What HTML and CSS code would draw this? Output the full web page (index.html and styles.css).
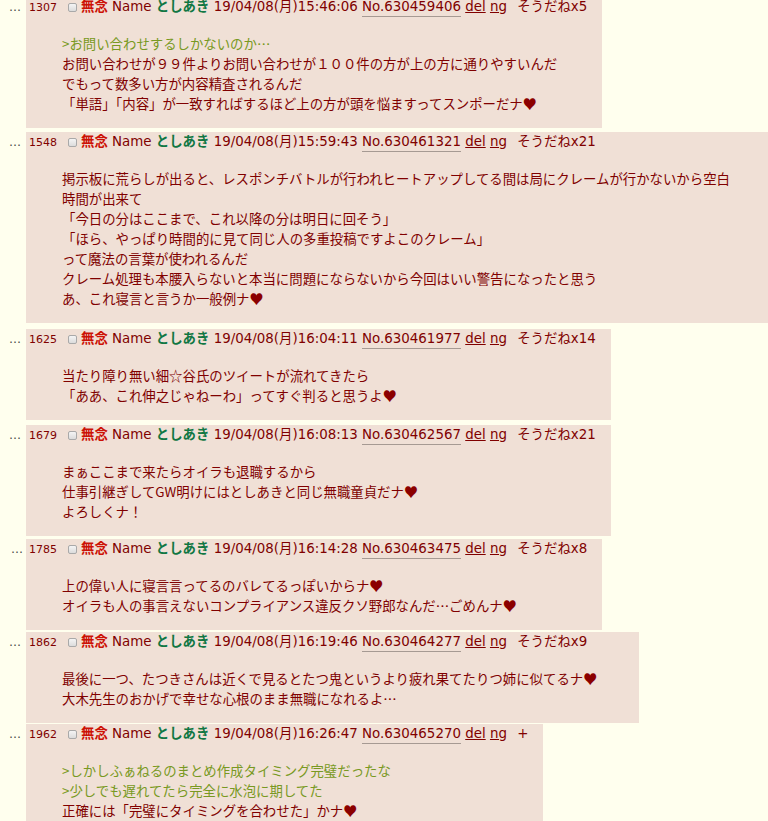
FILE: index.html
```html
<!DOCTYPE html>
<html lang="ja">
<head>
<meta charset="utf-8">
<title>thread</title>
<link rel="stylesheet" href="styles.css">
</head>
<body>
<div class="thread">

  <div class="row">
    <span class="dots">…</span>
    <div class="reply">
      <div class="head"><span class="rsc">1307</span><span class="chk"></span><span class="sub">無念</span> <span class="nm">Name</span> <span class="nick">としあき</span> <span class="dt">19/04/08(月)15:46:06</span> <span class="no">No.630459406</span> <a class="lnk">del</a> <a class="lnk">ng</a> <span class="sod">そうだねx5</span></div>
      <div class="body">
        <span class="quote">&gt;お問い合わせするしかないのか…</span><br>
        お問い合わせが９９件よりお問い合わせが１００件の方が上の方に通りやすいんだ<br>
        でもって数多い方が内容精査されるんだ<br>
        「単語」「内容」が一致すればするほど上の方が頭を悩ますってスンポーだナ<span class="heart">♥</span>
      </div>
    </div>
  </div>

  <div class="row">
    <span class="dots">…</span>
    <div class="reply">
      <div class="head"><span class="rsc">1548</span><span class="chk"></span><span class="sub">無念</span> <span class="nm">Name</span> <span class="nick">としあき</span> <span class="dt">19/04/08(月)15:59:43</span> <span class="no">No.630461321</span> <a class="lnk">del</a> <a class="lnk">ng</a> <span class="sod">そうだねx21</span></div>
      <div class="body">
        掲示板に荒らしが出ると、レスポンチバトルが行われヒートアップしてる間は局にクレームが行かないから空白<br>時間が出来て<br>
        「今日の分はここまで、これ以降の分は明日に回そう」<br>
        「ほら、やっぱり時間的に見て同じ人の多重投稿ですよこのクレーム」<br>
        って魔法の言葉が使われるんだ<br>
        クレーム処理も本腰入らないと本当に問題にならないから今回はいい警告になったと思う<br>
        あ、これ寝言と言うか一般例ナ<span class="heart">♥</span>
      </div>
    </div>
  </div>

  <div class="row gap6">
    <span class="dots">…</span>
    <div class="reply">
      <div class="head"><span class="rsc">1625</span><span class="chk"></span><span class="sub">無念</span> <span class="nm">Name</span> <span class="nick">としあき</span> <span class="dt">19/04/08(月)16:04:11</span> <span class="no">No.630461977</span> <a class="lnk">del</a> <a class="lnk">ng</a> <span class="sod">そうだねx14</span></div>
      <div class="body">
        当たり障り無い細☆谷氏のツイートが流れてきたら<br>
        「ああ、これ伸之じゃねーわ」ってすぐ判ると思うよ<span class="heart">♥</span>
      </div>
    </div>
  </div>

  <div class="row gap5">
    <span class="dots">…</span>
    <div class="reply">
      <div class="head"><span class="rsc">1679</span><span class="chk"></span><span class="sub">無念</span> <span class="nm">Name</span> <span class="nick">としあき</span> <span class="dt">19/04/08(月)16:08:13</span> <span class="no">No.630462567</span> <a class="lnk">del</a> <a class="lnk">ng</a> <span class="sod">そうだねx21</span></div>
      <div class="body">
        まぁここまで来たらオイラも退職するから<br>
        仕事引継ぎしてGW明けにはとしあきと同じ無職童貞だナ<span class="heart">♥</span><br>
        よろしくナ！
      </div>
    </div>
  </div>

  <div class="row gap3 shift">
    <span class="dots">…</span>
    <div class="reply">
      <div class="head"><span class="rsc">1785</span><span class="chk"></span><span class="sub">無念</span> <span class="nm">Name</span> <span class="nick">としあき</span> <span class="dt">19/04/08(月)16:14:28</span> <span class="no">No.630463475</span> <a class="lnk">del</a> <a class="lnk">ng</a> <span class="sod">そうだねx8</span></div>
      <div class="body">
        上の偉い人に寝言言ってるのバレてるっぽいからナ<span class="heart">♥</span><br>
        オイラも人の事言えないコンプライアンス違反クソ野郎なんだ…ごめんナ<span class="heart">♥</span>
      </div>
    </div>
  </div>

  <div class="row gap2">
    <span class="dots">…</span>
    <div class="reply">
      <div class="head"><span class="rsc">1862</span><span class="chk"></span><span class="sub">無念</span> <span class="nm">Name</span> <span class="nick">としあき</span> <span class="dt">19/04/08(月)16:19:46</span> <span class="no">No.630464277</span> <a class="lnk">del</a> <a class="lnk">ng</a> <span class="sod">そうだねx9</span></div>
      <div class="body">
        最後に一つ、たつきさんは近くで見るとたつ鬼というより疲れ果てたりつ姉に似てるナ<span class="heart">♥</span><br>
        大木先生のおかげで幸せな心根のまま無職になれるよ…
      </div>
    </div>
  </div>

  <div class="row gap0">
    <span class="dots">…</span>
    <div class="reply">
      <div class="head"><span class="rsc">1962</span><span class="chk"></span><span class="sub">無念</span> <span class="nm">Name</span> <span class="nick">としあき</span> <span class="dt">19/04/08(月)16:26:47</span> <span class="no">No.630465270</span> <a class="lnk">del</a> <a class="lnk">ng</a> <span class="sod">+</span></div>
      <div class="body">
        <span class="quote">&gt;しかしふぁねるのまとめ作成タイミング完璧だったな</span><br>
        <span class="quote">&gt;少しでも遅れてたら完全に水泡に期してた</span><br>
        正確には「完璧にタイミングを合わせた」かナ<span class="heart">♥</span>
      </div>
    </div>
  </div>

</div>
</body>
</html>
```

FILE: styles.css
```css
html, body {
  margin: 0;
  padding: 0;
  background: #FFFFEE;
}
body {
  font-family: "DejaVu Sans", "Noto Sans CJK JP", sans-serif;
  font-size: 13.4px;
  color: #800000;
  overflow: hidden;
}
.thread {
  display: flex;
  flex-direction: column;
  gap: 4px;
  margin-top: -3px;
}
.row {
  display: flex;
  align-items: flex-start;
}
.row.gap6 { margin-top: 2px; }
.row.gap5 { margin-top: 1px; }
.row.gap3 { margin-top: -1px; }
.row.gap2 { margin-top: -2px; }
.row.gap0 { margin-top: -3px; }
.dots {
  flex: 0 0 26px;
  box-sizing: border-box;
  padding-left: 9px;
  font-size: 12px;
  line-height: 20px;
  color: #444;
}
.reply {
  flex: 0 1 auto;
  min-width: 0;
  background: #F0E0D6;
  padding: 0 15px 15px 3px;
}
.head {
  line-height: 20px;
  white-space: nowrap;
}
.rsc {
  font-size: 11px;
  margin-right: 11px;
}
.chk {
  display: inline-block;
  width: 7px;
  height: 7px;
  border: 1px solid #a9a9a9;
  border-radius: 2px;
  background: linear-gradient(#f4f4f4, #dcdcdc);
  margin-right: 4px;
  vertical-align: -1px;
}
.sub {
  color: #CC1105;
  font-weight: bold;
}
.nick {
  color: #117743;
  font-weight: bold;
}
.no {
  border-bottom: 1px solid #a69a93;
  padding-bottom: 2px;
}
.lnk {
  color: #800000;
  text-decoration: underline;
}
.sod {
  margin-left: 6px;
}
.body {
  margin: 15px 27px 0 33px;
  line-height: 20px;
  white-space: nowrap;
  font-family: "Noto Sans CJK JP", sans-serif;
}
.quote {
  color: #789922;
}
.heart {
  color: #8b0000;
  font-size: 14px;
}
.shift .dots { padding-left: 11px; }
```
